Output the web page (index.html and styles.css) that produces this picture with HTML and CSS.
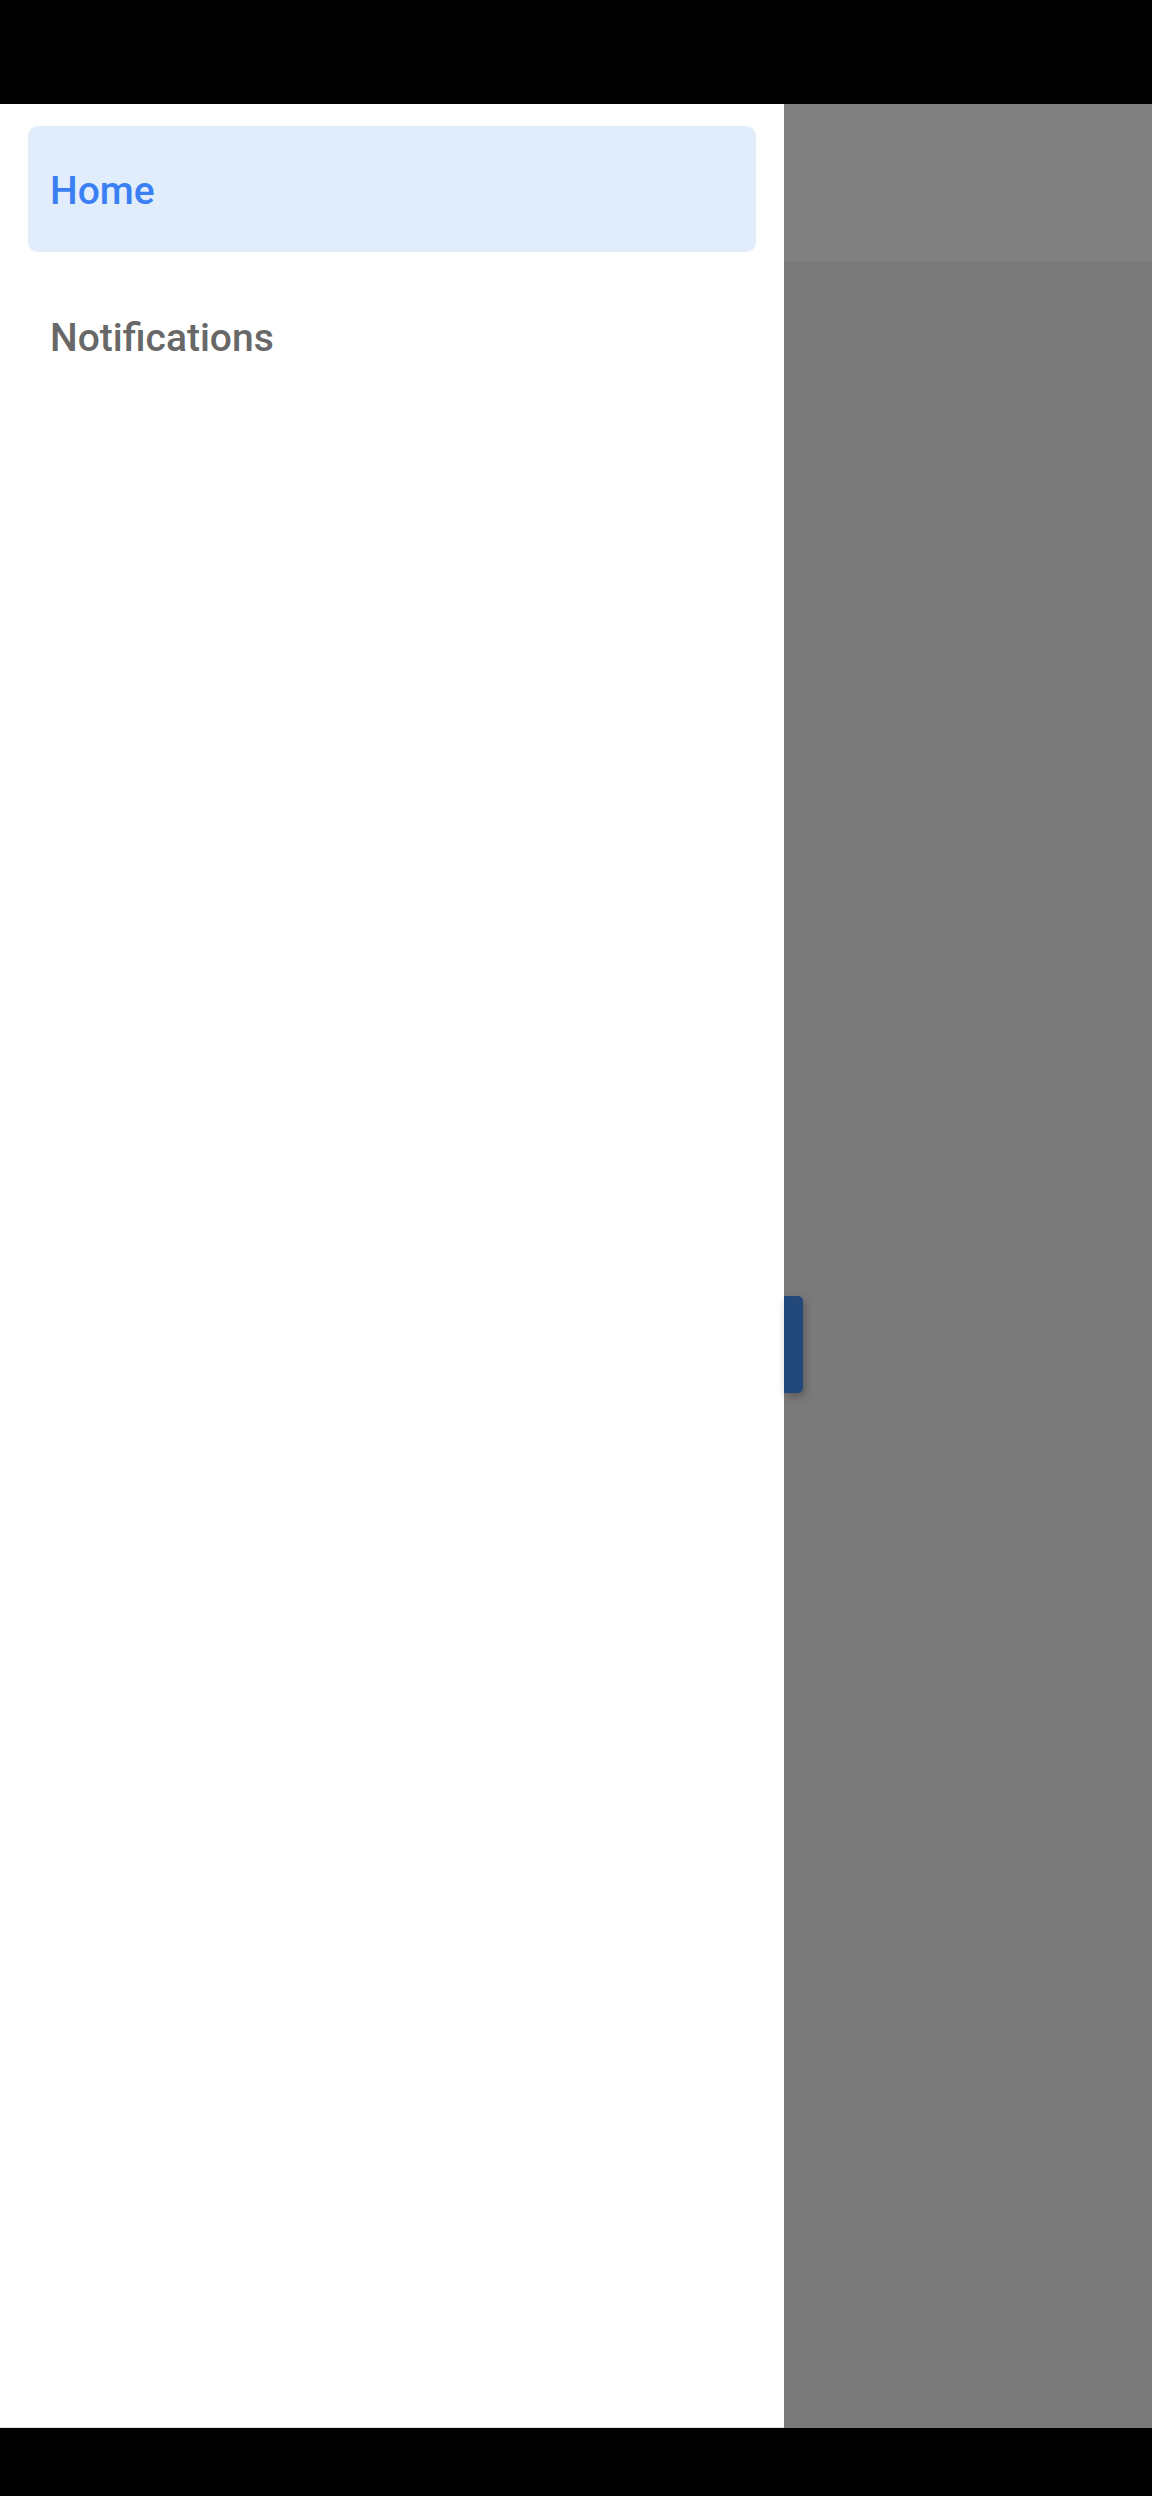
FILE: index.html
```html
<!DOCTYPE html>
<html>
<head>
<meta charset="utf-8">
<link rel="stylesheet" href="styles.css">
</head>
<body>
<div class="screen">
  <div class="status-bar"></div>
  <div class="main">
    <nav class="drawer">
      <div class="nav-item active">Home</div>
      <div class="nav-item">Notifications</div>
    </nav>
    <div class="scrim">
      <div class="scrim-header"></div>
      <div class="scrim-body">
        <div class="side-tab"></div>
      </div>
    </div>
  </div>
  <div class="nav-bar"></div>
</div>
</body>
</html>
```
FILE: styles.css
```css
html, body {
  margin: 0;
  padding: 0;
  background: #000;
}
.screen {
  width: 1152px;
  height: 2496px;
  display: flex;
  flex-direction: column;
  font-family: Roboto, "Noto Sans", sans-serif;
}
.status-bar {
  height: 104px;
  background: #000;
  flex: none;
}
.main {
  flex: 1;
  display: flex;
  min-height: 0;
}
.drawer {
  width: 784px;
  flex: none;
  background: #fff;
  box-sizing: border-box;
  padding: 22px 28px;
  display: flex;
  flex-direction: column;
  gap: 21px;
  border-bottom: 1px solid #e2e2e2;
}
.nav-item {
  height: 126px;
  box-sizing: border-box;
  display: flex;
  align-items: center;
  padding-left: 22px;
  padding-top: 4px;
  border-radius: 10px;
  font-size: 39px;
  font-weight: 500;
  color: #686868;
  line-height: 1;
}
.nav-item.active {
  background: #e1edfb;
  color: #3a7ff3;
}
.scrim {
  flex: 1;
  display: flex;
  flex-direction: column;
}
.scrim-header {
  height: 157px;
  background: #808080;
  flex: none;
}
.scrim-body {
  flex: 1;
  background: #7a7a7a;
  position: relative;
}
.side-tab {
  position: absolute;
  left: 0;
  top: 1035px;
  width: 19px;
  height: 97px;
  background: #22497a;
  border-radius: 0 5px 5px 0;
  box-shadow: 2px 4px 8px rgba(0, 0, 0, 0.25);
}
.nav-bar {
  height: 68px;
  background: #000;
  flex: none;
}
```
